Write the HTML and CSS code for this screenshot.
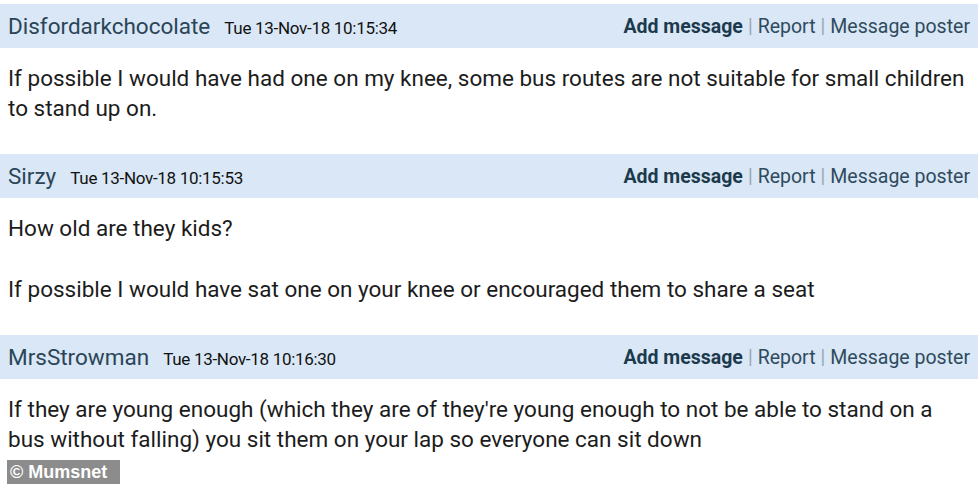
FILE: index.html
```html
<!DOCTYPE html>
<html lang="en">
<head>
    <meta charset="UTF-8">
    <title>Mumsnet thread</title>
    <link rel="stylesheet" href="styles.css">
</head>
<body>
    <div class="thread">
        <div class="post">
            <div class="post-header">
                <div class="poster">
                    <span class="username">Disfordarkchocolate</span>
                    <span class="date">Tue 13-Nov-18 10:15:34</span>
                </div>
                <div class="actions">
                    <a href="#" class="action-main">Add message</a>
                    <span class="sep">|</span>
                    <a href="#">Report</a>
                    <span class="sep">|</span>
                    <a href="#">Message poster</a>
                </div>
            </div>
            <div class="post-body">
                <p>If possible I would have had one on my knee, some bus routes are not suitable for small children to stand up on.</p>
            </div>
        </div>

        <div class="post">
            <div class="post-header">
                <div class="poster">
                    <span class="username">Sirzy</span>
                    <span class="date">Tue 13-Nov-18 10:15:53</span>
                </div>
                <div class="actions">
                    <a href="#" class="action-main">Add message</a>
                    <span class="sep">|</span>
                    <a href="#">Report</a>
                    <span class="sep">|</span>
                    <a href="#">Message poster</a>
                </div>
            </div>
            <div class="post-body">
                <p>How old are they kids?</p>
                <p>If possible I would have sat one on your knee or encouraged them to share a seat</p>
            </div>
        </div>

        <div class="post">
            <div class="post-header">
                <div class="poster">
                    <span class="username">MrsStrowman</span>
                    <span class="date">Tue 13-Nov-18 10:16:30</span>
                </div>
                <div class="actions">
                    <a href="#" class="action-main">Add message</a>
                    <span class="sep">|</span>
                    <a href="#">Report</a>
                    <span class="sep">|</span>
                    <a href="#">Message poster</a>
                </div>
            </div>
            <div class="post-body">
                <p>If they are young enough (which they are of they're young enough to not be able to stand on a bus without falling) you sit them on your lap so everyone can sit down</p>
            </div>
        </div>
    </div>

    <!-- watermark -->
    <div class="credit">&copy; Mumsnet</div>
</body>
</html>
```

FILE: styles.css
```css
* {
    margin: 0;
    padding: 0;
    box-sizing: border-box;
}

body {
    width: 980px;
    height: 484px;
    background: #fff;
    font-family: Roboto, "Liberation Sans", sans-serif;
    color: #1c1c1c;
    position: relative;
    overflow: hidden;
}

.thread {
    padding: 4px 2px 0 0;
}

.post-header {
    height: 44px;
    padding: 0 8px;
    background: #d9e7f6;
    display: flex;
    justify-content: space-between;
    align-items: center;
}

.poster {
    display: flex;
    align-items: baseline;
    gap: 14px;
}

.username {
    font-size: 22.5px;
    color: #2a4556;
}

.date {
    font-size: 17px;
    color: #111;
    letter-spacing: -0.3px;
}

.actions {
    display: flex;
    align-items: baseline;
    gap: 5px;
    font-size: 19.5px;
}

.actions a {
    color: #2f4b5d;
    text-decoration: none;
}

.actions .action-main {
    font-weight: 700;
    color: #1c3a4d;
}

.sep {
    color: #9aa7b0;
}

.post-body {
    padding: 15px 8px 31px;
}

.post-body p {
    font-size: 22.5px;
    line-height: 30px;
}

.post-body p + p {
    margin-top: 31px;
}

.credit {
    position: absolute;
    left: 7px;
    bottom: 0;
    width: 113px;
    height: 24px;
    padding-left: 3px;
    background: #8c8c8c;
    color: #fff;
    font-family: "Liberation Sans", Arial, sans-serif;
    font-weight: 700;
    font-size: 18px;
    line-height: 24px;
}
```
